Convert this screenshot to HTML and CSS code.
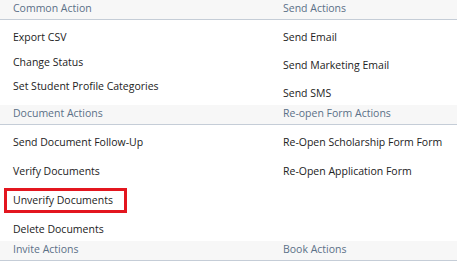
FILE: index.html
```html
<!DOCTYPE html>
<html lang="en">
<head>
    <meta charset="UTF-8">
    <meta name="viewport" content="width=device-width, initial-scale=1.0">
    <title>Bulk Actions</title>
    <link rel="stylesheet" href="styles.css">
</head>
<body>

    <div id="actions">
        <div class="group-head">
            <div class="head-cell">Common Action</div>
            <div class="head-cell">Send Actions</div>
        </div>
        <div class="group-body first">
            <ul class="list list-tight">
                <li>Export CSV</li>
                <li>Change Status</li>
                <li>Set Student Profile Categories</li>
            </ul>
            <ul class="list list-wide">
                <li>Send Email</li>
                <li>Send Marketing Email</li>
                <li>Send SMS</li>
            </ul>
        </div>

        <div class="group-head">
            <div class="head-cell">Document Actions</div>
            <div class="head-cell">Re-open Form Actions</div>
        </div>
        <div class="group-body second">
            <ul class="list list-doc">
                <li>Send Document Follow-Up</li>
                <li>Verify Documents</li>
                <li><span class="marked">Unverify Documents</span></li>
                <li>Delete Documents</li>
            </ul>
            <ul class="list list-doc">
                <li>Re-Open Scholarship Form Form</li>
                <li>Re-Open Application Form</li>
            </ul>
        </div>

        <div class="group-head">
            <div class="head-cell">Invite Actions</div>
            <div class="head-cell">Book Actions</div>
        </div>
    </div>

</body>
</html>
```

FILE: styles.css
```css
body {
    margin: 0;
    font-family: "Open Sans", "Noto Sans", sans-serif;
    font-size: 10.5px;
    color: #222;
    background: #fff;
}

#actions {
    width: 457px;
}

.group-head {
    display: grid;
    grid-template-columns: 270px 1fr;
    height: 19px;
    background: #f7f7f7;
    border-bottom: 1px solid #c5cdd7;
}

.head-cell {
    padding-left: 13px;
    line-height: 17px;
    color: #5b7087;
}

.group-body {
    display: grid;
    grid-template-columns: 270px 1fr;
}

.group-body.first {
    height: 85px;
}

.group-body.second {
    height: 116px;
}

.list {
    list-style: none;
    margin: 0;
    padding: 0 0 0 13px;
}

.list li {
    display: flex;
    align-items: center;
}

.list-tight {
    padding-top: 5px;
}

.list-tight li {
    height: 24.5px;
}

.list-wide {
    padding-top: 3px;
}

.list-wide li {
    height: 28px;
}

.list-doc {
    padding-top: 2.5px;
}

.list-doc li {
    height: 29px;
}

.marked {
    display: inline-block;
    margin-left: -9px;
    padding: 0 11px 0 6px;
    line-height: 19px;
    border: 3px solid #e3161f;
}
```
